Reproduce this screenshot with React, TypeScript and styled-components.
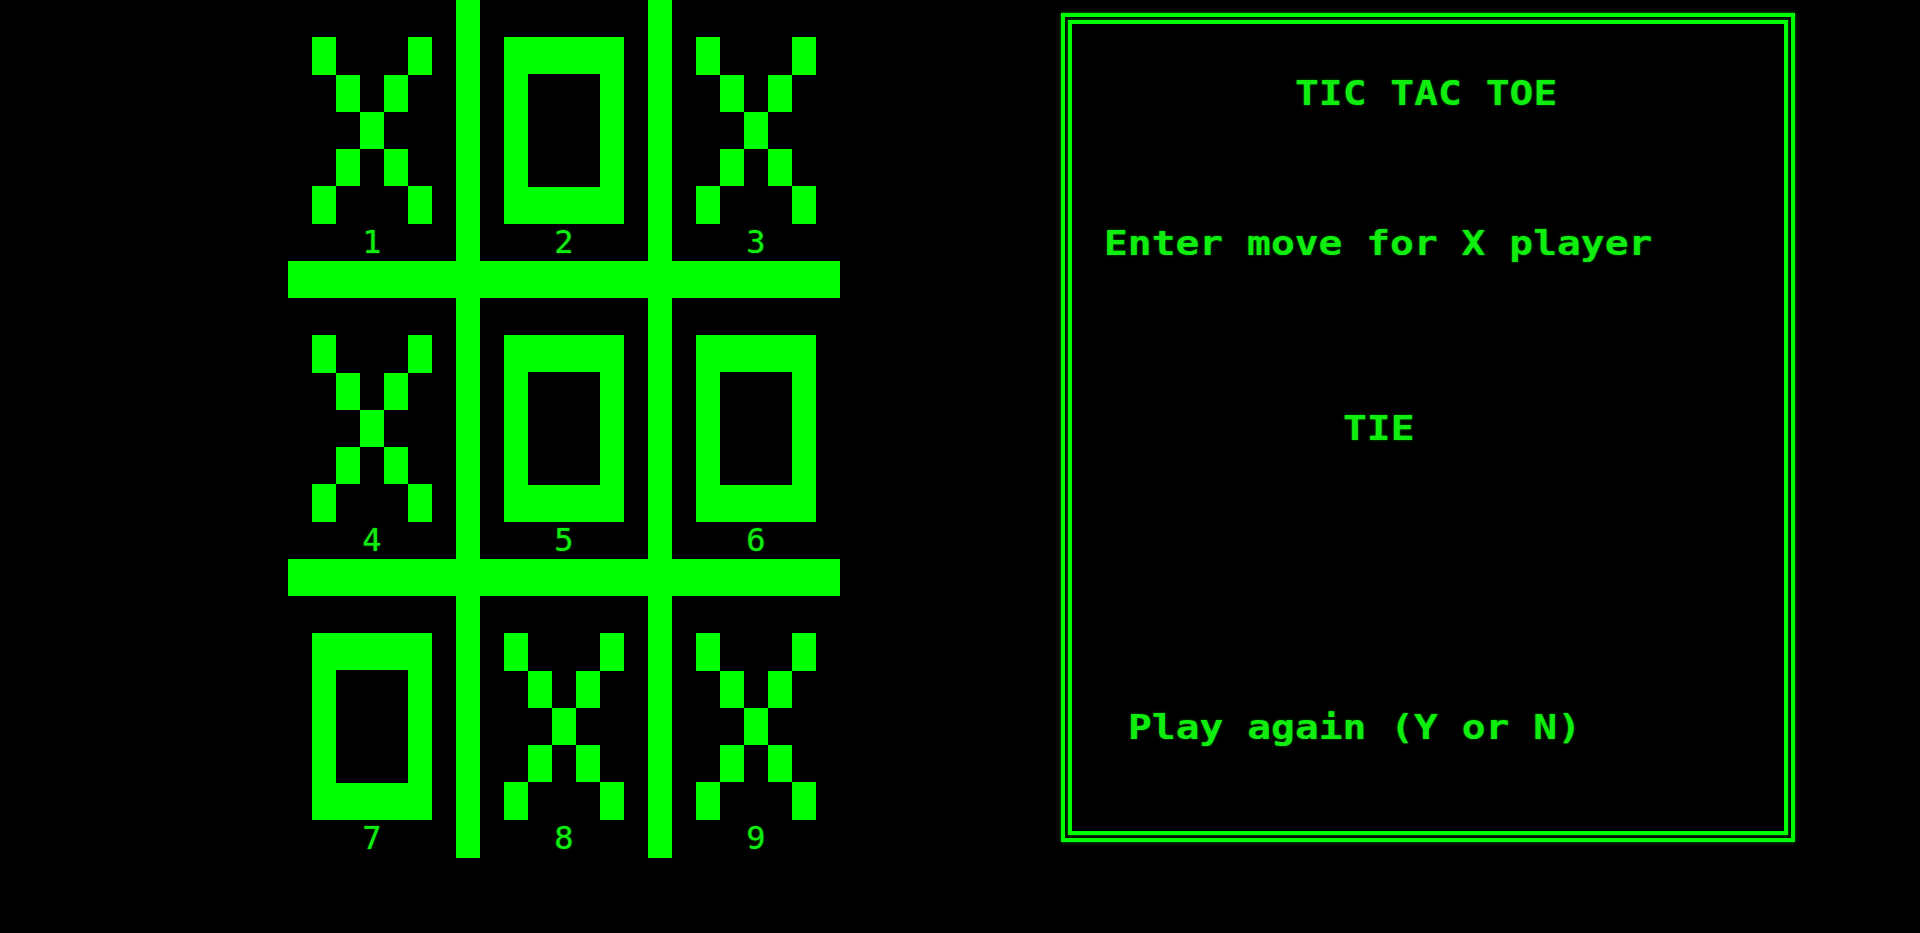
import React from "react";
import styled, { createGlobalStyle } from "styled-components";

const GREEN = "#00ff00";
const TEXT = "#10ee10";

// one "screen pixel" of the old display
const UX = 24;
const UY = 37.3;

const GlobalStyle = createGlobalStyle`
  html, body {
    margin: 0;
    padding: 0;
    background: #000;
  }
  body {
    width: 1920px;
    height: 933px;
    overflow: hidden;
    font-family: "DejaVu Sans Mono", "Liberation Mono", monospace;
  }
`;

const Screen = styled.div`
  display: flex;
  align-items: flex-start;
  gap: 221px;
  height: 933px;
  padding-left: 288px;
  box-sizing: border-box;
`;

const Board = styled.div`
  display: grid;
  grid-template-columns: 168px 24px 168px 24px 168px;
  grid-template-rows: 261px 37px 261px 37px 262px;
`;

const VLine = styled.div<{ $col: number }>`
  grid-column: ${(p) => p.$col};
  grid-row: 1 / -1;
  background: ${GREEN};
`;

const HBar = styled.div<{ $row: number }>`
  grid-row: ${(p) => p.$row};
  grid-column: 1 / -1;
  background: ${GREEN};
`;

const Cell = styled.div<{ $row: number; $col: number }>`
  grid-row: ${(p) => p.$row};
  grid-column: ${(p) => p.$col};
  display: flex;
  flex-direction: column;
  align-items: center;
  padding-top: ${UY}px;
  box-sizing: border-box;
`;

const XMark = styled.div`
  display: grid;
  grid-template-columns: repeat(5, ${UX}px);
  grid-template-rows: repeat(5, ${UY}px);
`;

const Pixel = styled.div<{ $on: boolean }>`
  background: ${(p) => (p.$on ? GREEN : "transparent")};
`;

const OMark = styled.div`
  width: ${UX * 5}px;
  height: ${UY * 5}px;
  box-sizing: border-box;
  border: solid ${GREEN};
  border-width: ${UY}px ${UX}px;
`;

const CellNumber = styled.div`
  height: ${UY}px;
  line-height: ${UY}px;
  font-size: 32px;
  color: ${TEXT};
  text-shadow: 0 0 2px rgba(0, 255, 0, 0.5);
`;

const Panel = styled.div`
  margin-top: 13px;
  width: 734px;
  height: 829px;
  box-sizing: border-box;
  border: 4px solid ${GREEN};
  padding: 3px;
  box-shadow: 0 0 3px rgba(0, 255, 0, 0.55);
`;

const Frame = styled.div`
  height: 100%;
  box-sizing: border-box;
  border: 4px solid ${GREEN};
  box-shadow: 0 0 3px rgba(0, 255, 0, 0.55);
  display: flex;
  flex-direction: column;
`;

const Line = styled.div<{ $indent: number; $top: number }>`
  margin-top: ${(p) => p.$top}px;
  padding-left: ${(p) => p.$indent}px;
  font-size: 33px;
  line-height: 40px;
  font-weight: 700;
  color: ${TEXT};
  white-space: pre;
  text-shadow: 0 0 2px rgba(0, 255, 0, 0.5);
`;

// the terminal font is wider than any installed mono face
const Wide = styled.span`
  display: inline-block;
  transform: scaleX(1.2);
  transform-origin: left center;
`;

const X_PATTERN = [
  [1, 0, 0, 0, 1],
  [0, 1, 0, 1, 0],
  [0, 0, 1, 0, 0],
  [0, 1, 0, 1, 0],
  [1, 0, 0, 0, 1],
];

const moves = ["X", "O", "X", "X", "O", "O", "O", "X", "X"];

const Mark = ({ kind }: { kind: string }) => {
  if (kind === "O") return <OMark />;
  return (
    <XMark>
      {X_PATTERN.flat().map((on, i) => (
        <Pixel key={i} $on={on === 1} />
      ))}
    </XMark>
  );
};

const App = () => {
  return (
    <>
      <GlobalStyle />
      <Screen>
        <Board>
          {moves.map((m, i) => (
            <Cell key={i} $row={Math.floor(i / 3) * 2 + 1} $col={(i % 3) * 2 + 1}>
              <Mark kind={m} />
              <CellNumber>{i + 1}</CellNumber>
            </Cell>
          ))}
          <VLine $col={2} />
          <VLine $col={4} />
          <HBar $row={2} />
          <HBar $row={4} />
        </Board>
        <Panel>
          <Frame>
            <Line $indent={223} $top={50}>
              <Wide>TIC TAC TOE</Wide>
            </Line>
            <Line $indent={32} $top={110}>
              <Wide>Enter move for X player</Wide>
            </Line>
            <Line $indent={271} $top={145}>
              <Wide>TIE</Wide>
            </Line>
            <Line $indent={56} $top={259}>
              <Wide>Play again (Y or N)</Wide>
            </Line>
          </Frame>
        </Panel>
      </Screen>
    </>
  );
};

export default App;
